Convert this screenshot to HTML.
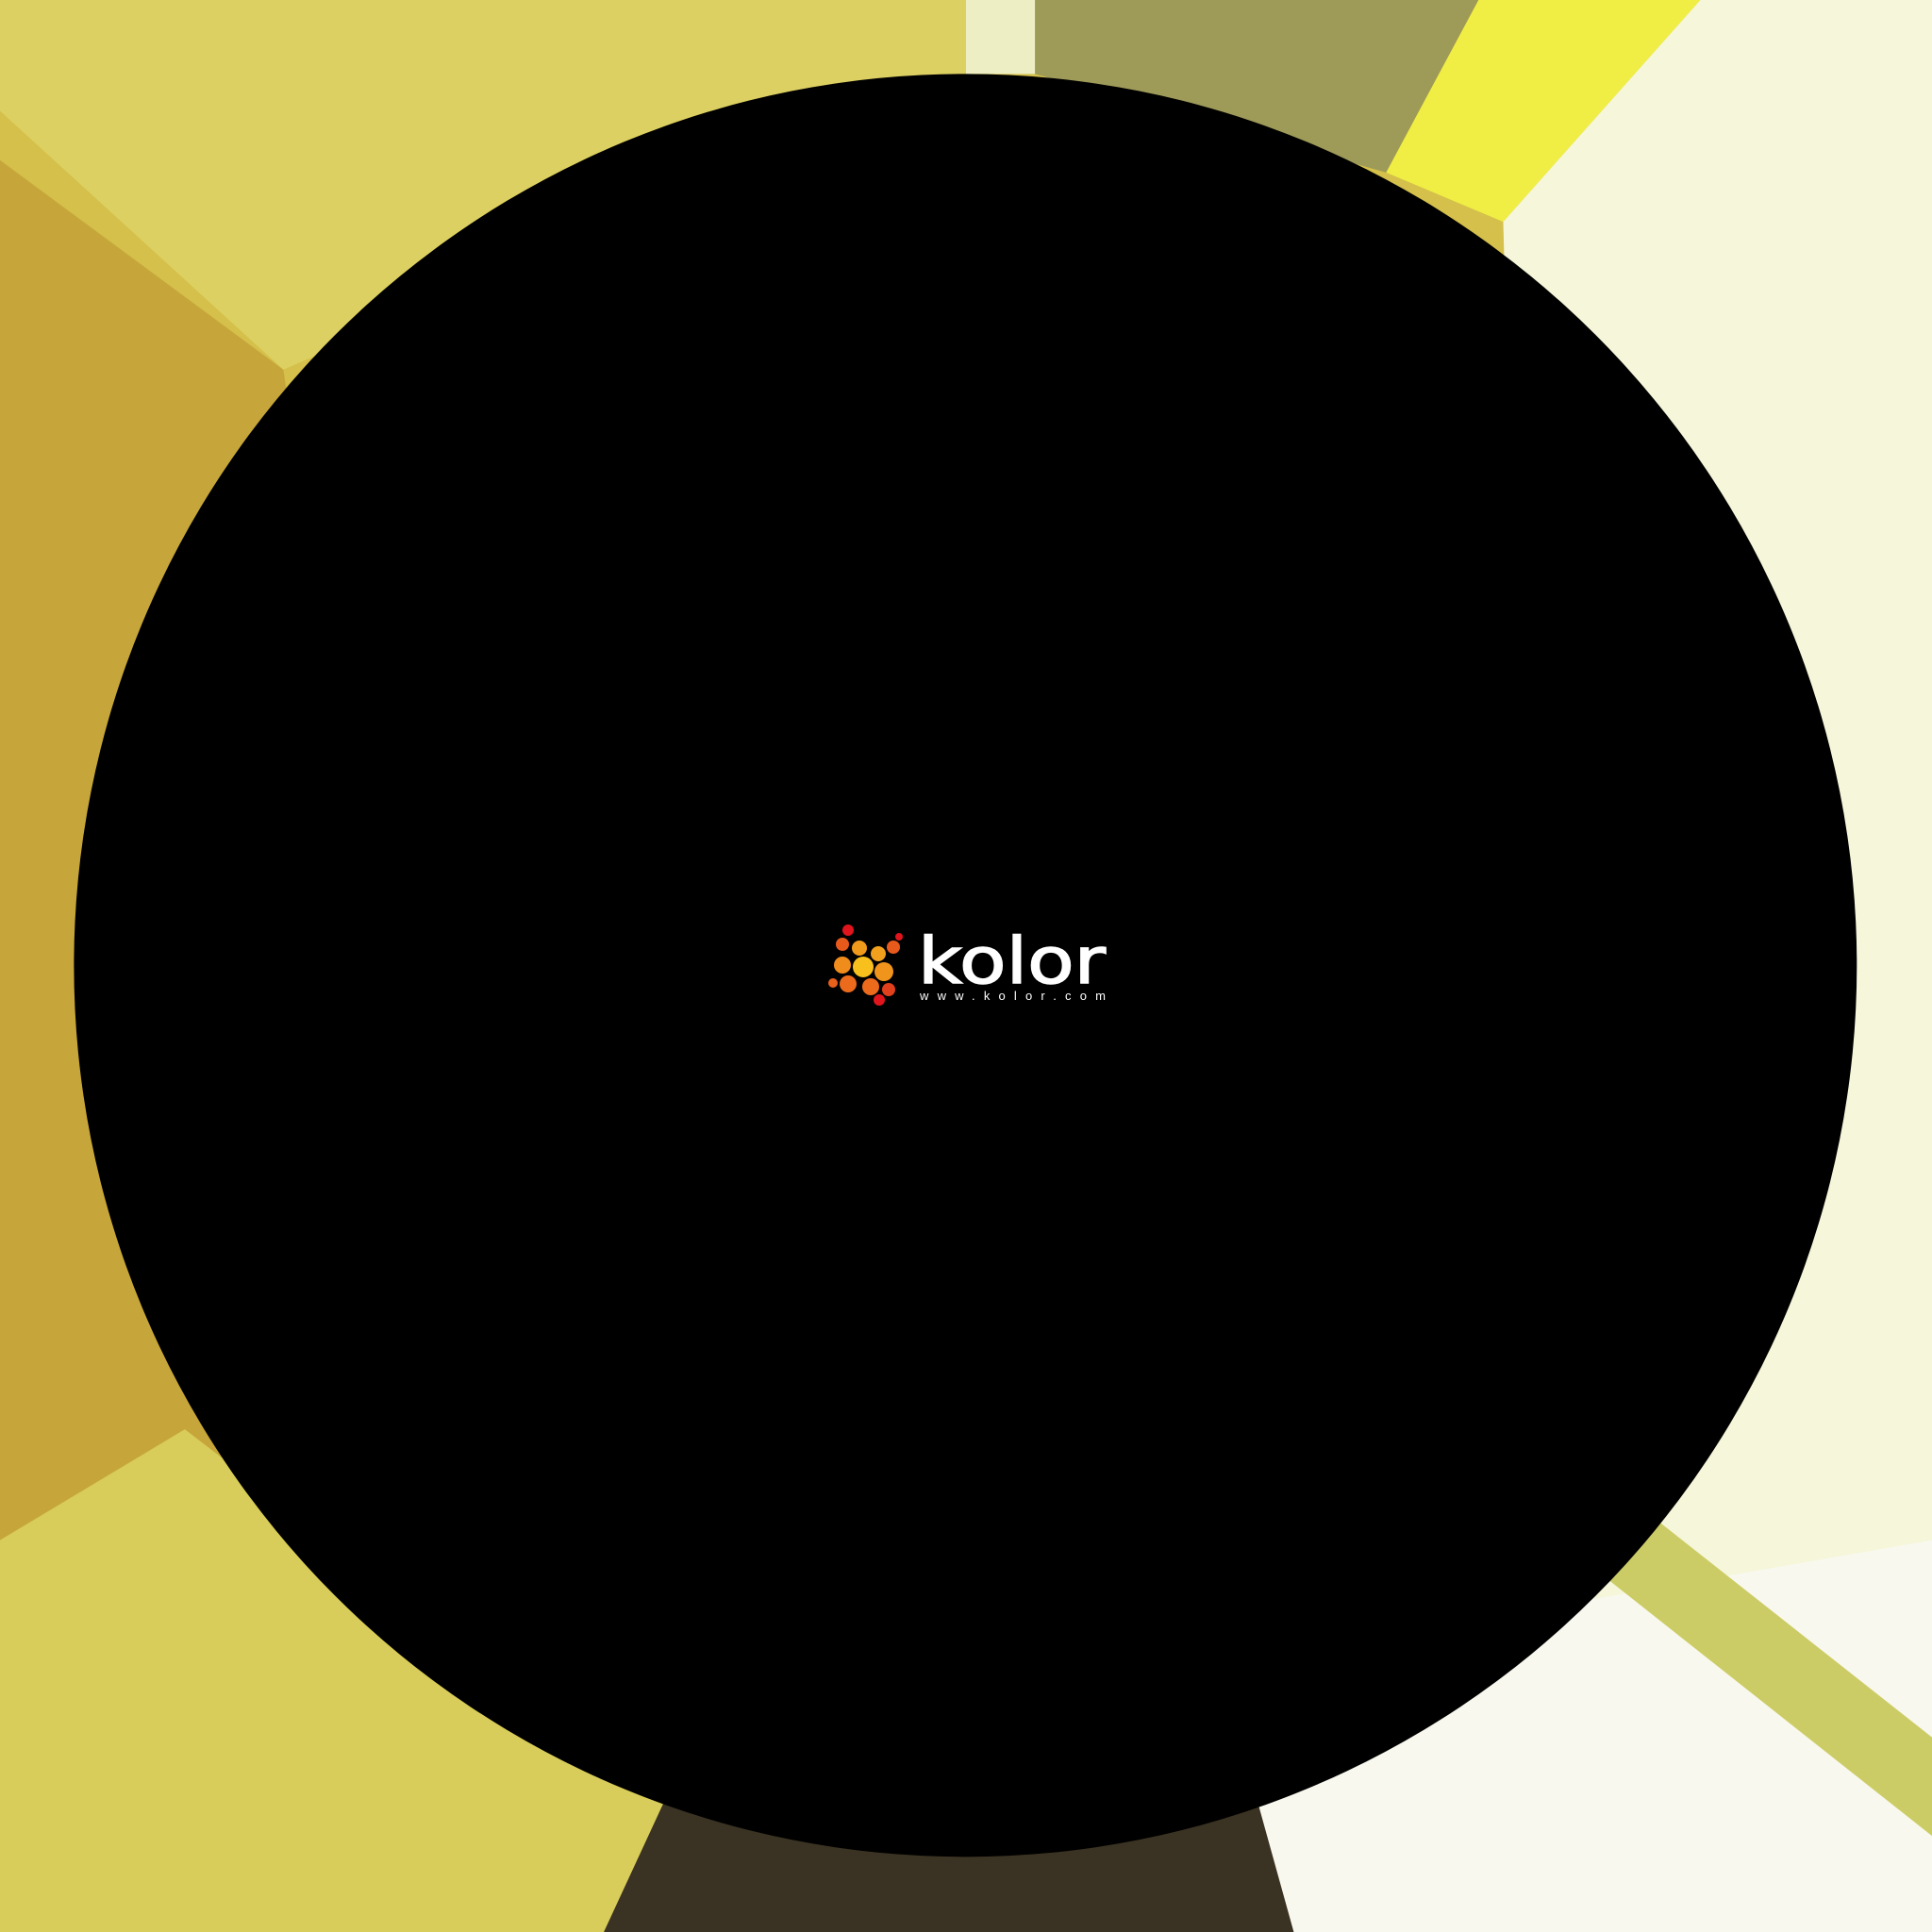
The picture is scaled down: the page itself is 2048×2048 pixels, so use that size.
<!DOCTYPE html>
<html><head><meta charset="utf-8"><style>html,body{margin:0;padding:0;background:#000}svg{display:block}</style></head>
<body>
<svg width="2048" height="2048" viewBox="0 0 2048 2048" xmlns="http://www.w3.org/2000/svg">
<g transform="scale(1.30612)">
<rect width="1568" height="1568" fill="#d4c04a"/>
<polygon points="0,130 230,300 300,780 300,1180 0,1250" fill="#c6a63a"/>
<polygon points="0,0 784,0 784,60 230,300 0,90" fill="#ddd062"/>
<polygon points="784,0 840,0 840,60 784,60" fill="#eeeec4"/>
<polygon points="840,0 1200,0 1125,140 840,60" fill="#9e9a58"/>
<polygon points="1200,0 1380,0 1220,180 1125,140" fill="#f0ee44"/>
<polygon points="1380,0 1568,0 1568,1300 1250,1300 1220,180" fill="#f6f6da"/>
<polygon points="1280,1300 1568,1250 1568,1568 1050,1568 1000,1470" fill="#f8f8ee"/>
<polygon points="1290,1270 1340,1230 1568,1410 1568,1490" fill="#cccc66"/>
<polygon points="540,1460 1020,1460 1050,1568 490,1568" fill="#3a3222"/>
<polygon points="0,1250 150,1160 540,1460 490,1568 0,1568" fill="#d8cc5a"/>
<circle cx="783.5" cy="783.5" r="723.5" fill="#000"/>
</g>
<g>
<circle cx="899" cy="986" r="6" fill="#e0141c"/>
<circle cx="953" cy="993" r="4" fill="#e0141c"/>
<circle cx="893" cy="1001" r="7" fill="#e85a1c"/>
<circle cx="911" cy="1005" r="8" fill="#f09a1c"/>
<circle cx="931" cy="1011" r="8" fill="#f0a01c"/>
<circle cx="947" cy="1004" r="7" fill="#e85a1c"/>
<circle cx="893" cy="1023" r="9" fill="#f08c1c"/>
<circle cx="915" cy="1025" r="11" fill="#f8c01c"/>
<circle cx="937" cy="1030" r="10" fill="#f0941c"/>
<circle cx="883" cy="1042" r="5" fill="#e8601c"/>
<circle cx="899" cy="1043" r="9" fill="#ec6a1c"/>
<circle cx="923" cy="1046" r="9" fill="#ec6a1c"/>
<circle cx="942" cy="1049" r="7" fill="#e0401c"/>
<circle cx="932" cy="1060" r="6" fill="#e0141c"/>
<text x="973" y="1042" font-family="'DejaVu Sans', 'Liberation Sans', sans-serif" font-size="68" fill="#fff" stroke="#fff" stroke-width="1.5" textLength="199" lengthAdjust="spacingAndGlyphs">kolor</text>
<text x="975" y="1060" font-family="'Liberation Sans', sans-serif" font-size="13" fill="#fff" textLength="197" lengthAdjust="spacing">www.kolor.com</text>
</g>
</svg>
</body></html>
